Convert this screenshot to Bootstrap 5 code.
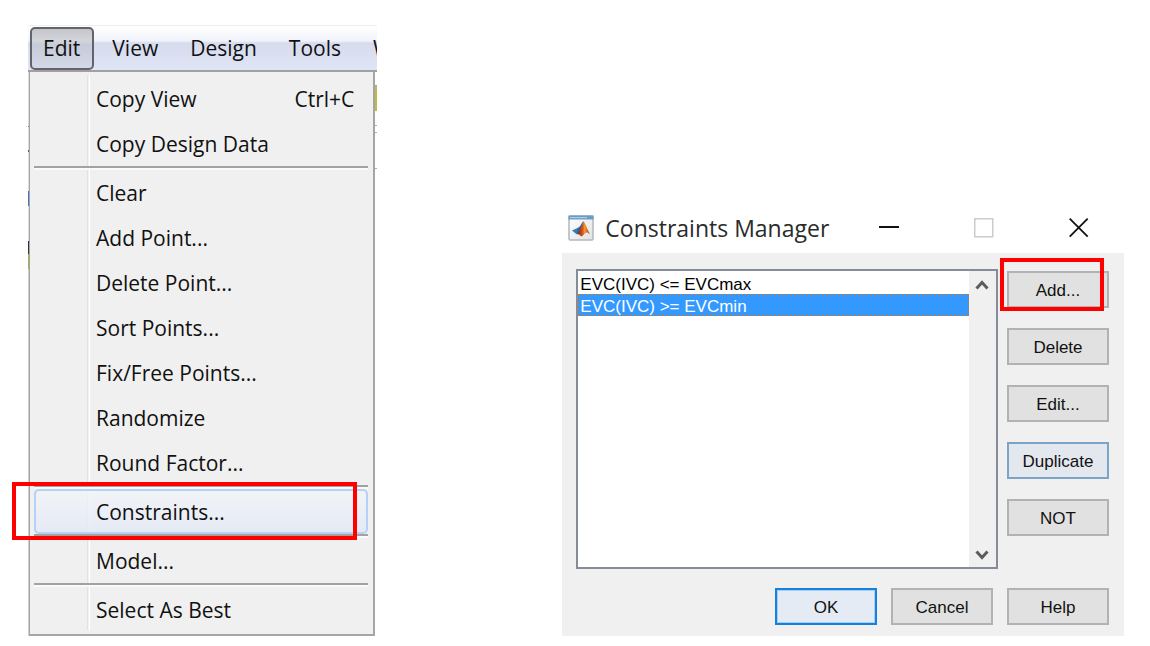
<!DOCTYPE html>
<html lang="en">
<head>
<meta charset="utf-8">
<meta name="viewport" content="width=device-width, initial-scale=1">
<title>Constraints Manager</title>
<link href="https://cdn.jsdelivr.net/npm/bootstrap@5.3.0/dist/css/bootstrap.min.css" rel="stylesheet">
<style>
  body { background: #fff; color: #111; font-family: "Open Sans", "Noto Sans", sans-serif; }
  button { color: inherit; }
  .menu-pane { padding: 25px 6px 0 28px; }
  .dialog-pane { padding: 202px 26px 10px 179px; }

  /* menu bar */
  .menu-strip { height: 47px; gap: 4px; padding: 1px 0 0 2px; border-top: 1px solid #eee; border-bottom: 2px solid #a0a0a4;
    background: linear-gradient(#fff 0, #f0f3fa 15px, #d6dcee 17px, #dfe5f5 100%); }
  .menu-top { font-size: 21px; line-height: 42px; padding: 0 14px; border: 0; background: none; white-space: nowrap; }
  .menu-top.opened { padding: 0 12px 0 11px; border: 2px solid #62646b; border-radius: 5px; line-height: 39px;
    background: linear-gradient(#c4c6cc 0, #d3d5db 12px, #c6cbd9 16px, #d4d9e8 100%); }

  /* drop-down list; the toolbar behind shows as a thin strip at both sides */
  .menu-back { padding: 0 2px 0 1px;
    background:
      linear-gradient(#fff 13px, #aaa 13px 15px, #bdbb45 15px 39px, #fff 39px 53px, #aaa 53px 54px, #fff 54px 60px, #aaa 60px 61px, #fff 61px 96px, #aaa 96px 97px, #fff 97px) right / 2px 100% no-repeat,
      linear-gradient(#ddd 54px, #777 54px 55px, #ddd 55px 78px, #944 78px 80px, #ddd 80px 119px, #4672c4 119px 134px, #ddd 134px 169px, #333 169px 182px, #a9ab4e 182px 197px, #ccc 197px) left / 1px 100% no-repeat; }
  .menu-body { padding: 4px 5px 2px 4px; border: solid #a5a5a5; border-width: 0 2px 2px 1px;
    background: linear-gradient(90deg, #e2e2e2 1px, #f0f0f0 1px 2px, #fff 2px) 57px 3px / 3px 555px no-repeat #f0f0f0; }
  .menu-row { height: 45px; padding: 3px 14px 0 62px; font-size: 21px; border: 0; background: none; text-align: left; }
  .menu-row.hovered { border: 2px solid #b4d1f7; border-radius: 5px; padding: 3px 12px 0 60px;
    background: linear-gradient(rgba(242,244,248,.8), rgba(226,233,246,.8)); }
  .menu-rule { height: 4px; border-top: 2px solid #a2a2a2; border-bottom: 2px solid #fafafa; background: none; opacity: 1; margin: 0; }
  .callout { position: absolute; border: 4px solid #f00; pointer-events: none; z-index: 2; }
  .callout-item { left: -22px; right: 11px; top: -7px; bottom: -6px; }
  .callout-btn { left: -7px; right: 5px; top: -13px; bottom: -3px; }

  /* dialog */
  .title-strip { height: 51px; padding: 0 35px 0 6px; }
  .title-text { font-size: 23px; line-height: 50px; color: #2b2b2b; margin: 0 0 0 11px; font-weight: 400; }
  .win-buttons { gap: 75px; }
  .win-buttons button { border: 0; background: none; padding: 0; display: flex; }
  .dialog-body { background: #f0f0f0; padding: 16px 15px 11px 14px; font-family: "Liberation Sans", Arial, sans-serif; color: #111; }
  .list-frame { height: 300px; border: 2px solid #868b98; background: #fff; }
  .list-frame select { border: 0; outline: 0; padding: 1px 0 0; font-size: 17px; background: #fff; overflow: hidden; color: #000; border-radius: 0; appearance: none; }
  .list-frame option { height: 22px; min-height: 22px; padding: 3px 2px 0; line-height: 20px; }
  .list-frame option:checked { color: #fff; -webkit-text-fill-color: #fff;
    background:
      repeating-linear-gradient(90deg, #c87828 0 2px, #39f 2px 4px) top / 100% 1px no-repeat,
      repeating-linear-gradient(90deg, #c87828 0 2px, #39f 2px 4px) bottom / 100% 1px no-repeat,
      repeating-linear-gradient(#c87828 0 2px, #39f 2px 4px) left / 1px 100% no-repeat,
      repeating-linear-gradient(#c87828 0 2px, #39f 2px 4px) right / 1px 100% no-repeat,
      linear-gradient(#39f, #39f); }
  .scroll-track { width: 27px; background: #f0f0f0; padding: 9px 0 7px; }
  .dlg-btn { width: 102px; height: 37px; font-size: 17px; line-height: 20px; padding: 2px 0 0; border: 2px solid #b2b2b2; background: #e1e1e1; }
  .dlg-btn.hot { border-color: #7ba4c8; background: #e3e7ee; }
  .dlg-btn.primary { border-color: #1481dc; background: #e4ebf4; box-shadow: inset 0 0 0 1px #a8d0f2; }
  .side-stack { gap: 20px; padding-top: 2px; margin-left: 9px; }
  .foot-row { gap: 14px; padding-top: 19px; }
</style>
</head>
<body>
<main class="container-fluid p-0">
  <div class="row g-0">
    <section class="col-4 menu-pane">
      <nav class="menu-strip d-flex align-items-start overflow-hidden">
        <button class="menu-top opened" type="button">Edit</button>
        <button class="menu-top" type="button">View</button>
        <button class="menu-top" type="button">Design</button>
        <button class="menu-top" type="button">Tools</button>
        <button class="menu-top" type="button">Window</button>
      </nav>
      <div class="menu-back">
        <div class="menu-body d-flex flex-column">
          <button class="menu-row d-flex align-items-center justify-content-between" type="button"><span>Copy View</span><span>Ctrl+C</span></button>
          <button class="menu-row" type="button">Copy Design Data</button>
          <hr class="menu-rule">
          <button class="menu-row" type="button">Clear</button>
          <button class="menu-row" type="button">Add Point...</button>
          <button class="menu-row" type="button">Delete Point...</button>
          <button class="menu-row" type="button">Sort Points...</button>
          <button class="menu-row" type="button">Fix/Free Points...</button>
          <button class="menu-row" type="button">Randomize</button>
          <button class="menu-row" type="button">Round Factor...</button>
          <hr class="menu-rule">
          <div class="position-relative d-flex">
            <button class="menu-row hovered flex-fill" type="button">Constraints...</button>
            <div class="callout callout-item"></div>
          </div>
          <hr class="menu-rule">
          <button class="menu-row" type="button">Model...</button>
          <hr class="menu-rule">
          <button class="menu-row" type="button">Select As Best</button>
        </div>
      </div>
    </section>

    <section class="col-8 dialog-pane">
      <header class="title-strip d-flex align-items-center">
        <svg width="26" height="26" viewBox="0 0 26 26" aria-hidden="true">
          <defs>
            <linearGradient id="pk" x1="0" x2="1"><stop offset="0" stop-color="#7c1d12"/><stop offset=".45" stop-color="#e0561c"/><stop offset=".6" stop-color="#f0a032"/><stop offset="1" stop-color="#a32a10"/></linearGradient>
            <linearGradient id="bg" x1="0" y1="0" x2="1" y2="1"><stop offset="0" stop-color="#fff"/><stop offset="1" stop-color="#dfe2e4"/></linearGradient>
          </defs>
          <rect x="1" y="1" width="24" height="24" rx="1" fill="url(#bg)" stroke="#b4b8bc" stroke-width="1.5"/>
          <rect x="0.5" y="0.5" width="25" height="4" fill="#6a9dc4"/>
          <rect x="2" y="2" width="17" height="1.2" fill="#a9cbe4"/>
          <path d="M4 15.500l6-2.800 2.500 2.800-3.500 4-2-1.500z" fill="#2f7fb8"/>
          <path d="M10 12.700c2-.5 3-3.500 5-6.200l-.5 7.500-4.500 5-1-1z" fill="#3a5f8c"/>
          <path d="M15.500 6c2 2 3.500 8.500 6.500 13-2-1.500-3.500-2-4.500-1-1.500 1-2.500 3-4.500 3.500-1-1.500-2-2.500-4-2.500 3.500-2 4.500-8.500 6.500-13z" fill="url(#pk)"/>
        </svg>
        <h1 class="title-text me-auto">Constraints Manager</h1>
        <div class="win-buttons d-flex align-items-center">
          <button type="button" aria-label="Minimize"><svg width="20" height="20" viewBox="0 0 20 20"><path d="M0 9h20" stroke="#111" stroke-width="2"/></svg></button>
          <button type="button" aria-label="Maximize"><svg width="20" height="20" viewBox="0 0 20 20"><rect x="0.75" y="0.75" width="18" height="18" fill="none" stroke="#ccc" stroke-width="1.5"/></svg></button>
          <button type="button" aria-label="Close"><svg width="20" height="20" viewBox="0 0 20 20"><path d="M.7.7l18 18M18.700.7l-18 18" stroke="#111" stroke-width="1.8"/></svg></button>
        </div>
      </header>
      <div class="dialog-body">
        <div class="d-flex align-items-start">
          <div class="list-frame d-flex flex-fill">
            <select class="flex-fill" size="8" aria-label="Constraints">
              <option>EVC(IVC) &lt;= EVCmax</option>
              <option selected>EVC(IVC) &gt;= EVCmin</option>
            </select>
            <div class="scroll-track d-flex flex-column justify-content-between align-items-center">
              <svg width="14" height="12" viewBox="0 0 14 12"><path d="M1.500 8.500L7 2.500l5.500 6" fill="none" stroke="#5c5c5c" stroke-width="3"/></svg>
              <svg width="14" height="12" viewBox="0 0 14 12"><path d="M1.500 3.500L7 9.500l5.500-6" fill="none" stroke="#5c5c5c" stroke-width="3"/></svg>
            </div>
          </div>
          <div class="side-stack d-flex flex-column">
            <div class="position-relative d-flex">
              <button class="dlg-btn" type="button">Add...</button>
              <div class="callout callout-btn"></div>
            </div>
            <button class="dlg-btn" type="button">Delete</button>
            <button class="dlg-btn" type="button">Edit...</button>
            <button class="dlg-btn hot" type="button">Duplicate</button>
            <button class="dlg-btn" type="button">NOT</button>
          </div>
        </div>
        <div class="foot-row d-flex justify-content-end">
          <button class="dlg-btn primary" type="button">OK</button>
          <button class="dlg-btn" type="button">Cancel</button>
          <button class="dlg-btn" type="button">Help</button>
        </div>
      </div>
    </section>
  </div>
</main>
<script src="https://cdn.jsdelivr.net/npm/bootstrap@5.3.0/dist/js/bootstrap.bundle.min.js"></script>
</body>
</html>
